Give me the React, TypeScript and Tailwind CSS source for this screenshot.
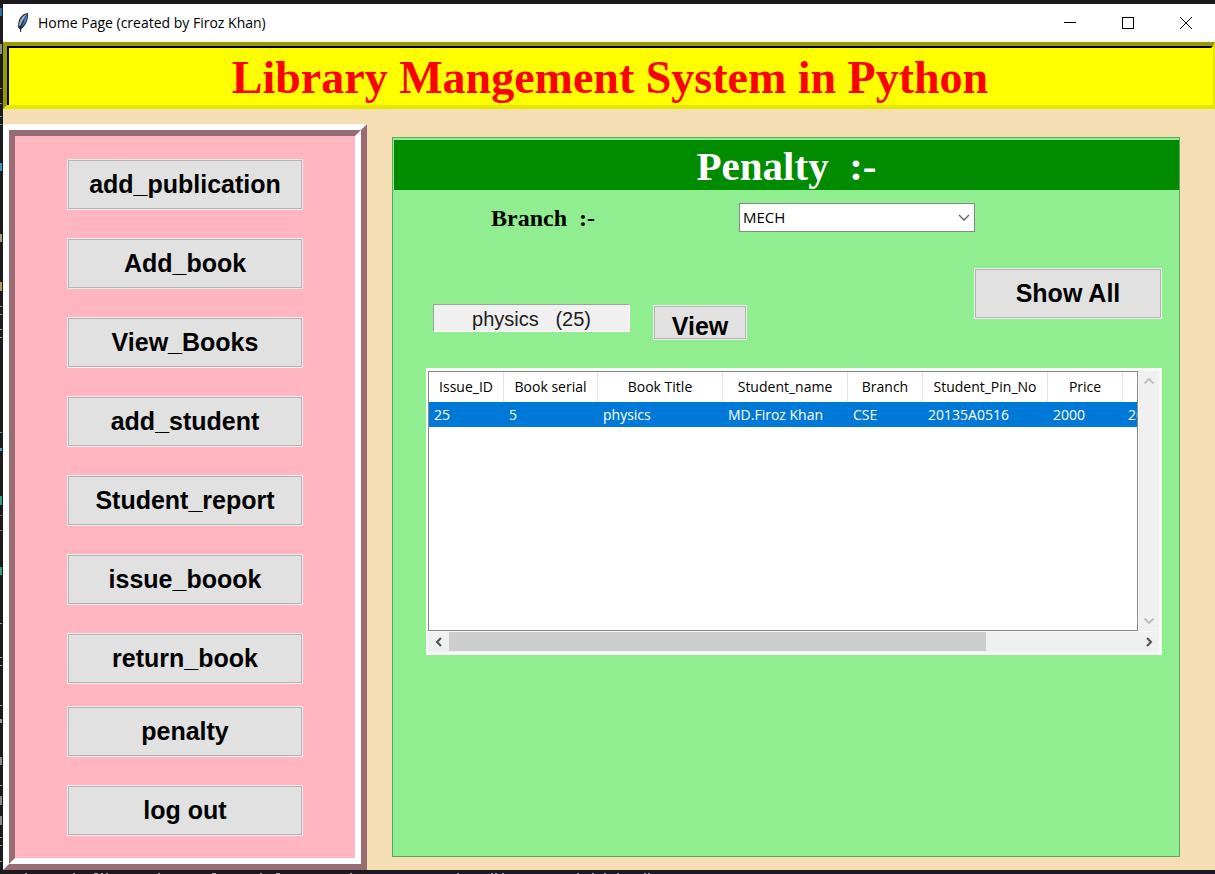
import type { ReactNode } from "react";

const menuItems = [
  "add_publication",
  "Add_book",
  "View_Books",
  "add_student",
  "Student_report",
  "issue_boook",
  "return_book",
];
const accountItems = ["penalty", "log out"];

const columns = [
  { title: "Issue_ID", value: "25", width: "w-[75px]" },
  { title: "Book serial", value: "5", width: "w-[94px]" },
  { title: "Book Title", value: "physics", width: "w-[125px]" },
  { title: "Student_name", value: "MD.Firoz Khan", width: "w-[125px]" },
  { title: "Branch", value: "CSE", width: "w-[75px]" },
  { title: "Student_Pin_No", value: "20135A0516", width: "w-[125px]" },
  { title: "Price", value: "2000", width: "w-[75px]" },
  { title: "", value: "20", width: "w-[125px]" },
];

// Marks of the editor window that lies behind this one: [y, height, colour]
const editorMarks: [number, number, string][] = [
  [8, 8, "#2f6f9f"], [44, 10, "#8a8a80"], [88, 1, "#c07040"], [103, 1, "#c07040"],
  [116, 1, "#3fb090"], [124, 1, "#3fb090"], [163, 8, "#3f8fbf"], [234, 8, "#a0a070"],
  [282, 9, "#b09a60"], [306, 1, "#6fa8c8"], [314, 1, "#6fa8c8"], [329, 1, "#6fa8c8"],
  [337, 1, "#6fa8c8"], [432, 1, "#3f9fcf"], [448, 3, "#3f9fcf"], [496, 9, "#2f9f80"],
  [515, 1, "#c05030"], [530, 1, "#c07040"], [567, 8, "#2f9f80"], [623, 1, "#999999"],
  [657, 1, "#999999"], [665, 1, "#999999"], [705, 1, "#999999"], [719, 4, "#999999"],
  [757, 8, "#888888"], [785, 1, "#999999"], [796, 9, "#888888"], [816, 9, "#888888"],
  [837, 1, "#999999"], [845, 1, "#999999"], [861, 1, "#999999"],
];

// Marks along the lower edge: [x, width]
const lowerMarks: [number, number][] = [
  [25, 2], [73, 2], [94, 4], [101, 2], [106, 2], [158, 2], [212, 4], [260, 2], [276, 4],
  [350, 2], [457, 2], [491, 2], [495, 2], [502, 2], [577, 2], [592, 2], [604, 2],
  [617, 2], [644, 2], [648, 2],
];

function PushButton({ children, className = "" }: { children: ReactNode; className?: string }) {
  return (
    <button
      type="button"
      className={`border border-[#ececec] bg-[#e1e1e1] font-['Liberation_Sans',sans-serif] text-[25px] leading-7 font-bold text-black ring-1 ring-[#b4b4b4] ring-inset ${className}`}
    >
      {children}
    </button>
  );
}

function Feather() {
  return (
    <svg width="14" height="22" viewBox="0 0 14 22" aria-hidden="true">
      <path d="M12 1 C7.500 1.200 3.500 5 2.500 10 L1.800 15 L4 17.500 L4.600 20.500 L5.300 17 C9 14.500 13 8 12 1 Z" fill="#2b3440" />
      <path d="M10.800 2 C6.500 3.500 3.800 8 3 13 L4 14.500 C5.500 10.500 8 6 10.800 2 Z" fill="#a3b2c2" />
      <path d="M11.200 2.500 C9 6 6 10 4.800 15 C8.500 12.500 11.800 8 11.200 2.500 Z" fill="#3f7fcc" />
      <path d="M8 8.500 L4.600 15 L4.600 20" fill="none" stroke="#111820" strokeWidth="0.800" />
    </svg>
  );
}

function TitleBar() {
  return (
    <div className="flex h-[38px] items-center bg-white pl-[13px] font-['Open_Sans',sans-serif] text-sm text-black">
      <Feather />
      <span className="ml-2">Home Page (created by Firoz Khan)</span>
      <div className="ml-auto flex h-full">
        <button type="button" aria-label="Minimize" className="flex w-[58px] items-center justify-center">
          <svg width="12" height="12" viewBox="0 0 12 12" stroke="#000"><path d="M0 5.500H12" /></svg>
        </button>
        <button type="button" aria-label="Maximize" className="flex w-[58px] items-center justify-center">
          <svg width="12" height="12" viewBox="0 0 12 12" fill="none" stroke="#000"><rect x=".5" y=".5" width="11" height="11" /></svg>
        </button>
        <button type="button" aria-label="Close" className="flex w-[58px] items-center justify-center">
          <svg width="12" height="12" viewBox="0 0 12 12" stroke="#000"><path d="M0 0L12 12M12 0L0 12" /></svg>
        </button>
      </div>
    </div>
  );
}

function Arrow({ d, color }: { d: string; color: string }) {
  return (
    <svg width="12" height="12" viewBox="0 0 12 12" fill="none" stroke={color} strokeWidth="2" aria-hidden="true">
      <path d={d} />
    </svg>
  );
}

function IssueTable() {
  return (
    <div className="border-2 border-b-[3px] border-[#f8fcf8] bg-[#f8f8f8] pt-px">
      <div className="flex gap-px">
        <div className="h-[260px] min-w-0 flex-1 overflow-hidden border border-[#828790] bg-white">
          <table className="w-[819px] table-fixed border-separate border-spacing-0 font-['Open_Sans',sans-serif] text-sm text-black">
            <thead>
              <tr className="h-[30px]">
                {columns.map((c, i) => (
                  <th key={i} scope="col" className={`${c.width} border-r border-[#e5e5e5] p-0 font-normal whitespace-nowrap`}>
                    {c.title}
                  </th>
                ))}
              </tr>
            </thead>
            <tbody>
              <tr className="h-[25px] bg-[#0078d7] text-white">
                {columns.map((c, i) => (
                  <td key={i} className="py-0 pr-0 pl-[5px] whitespace-nowrap">{c.value}</td>
                ))}
              </tr>
            </tbody>
          </table>
        </div>
        <div className="mr-px flex w-5 flex-col items-center justify-between bg-[#f0f0f0] py-1">
          <Arrow d="M1.500 8.500L6 4L10.500 8.500" color="#bfbfbf" />
          <Arrow d="M1.500 3.500L6 8L10.500 3.500" color="#bfbfbf" />
        </div>
      </div>
      <div className="mt-px mr-px flex h-5 items-center bg-[#f0f0f0]">
        <div className="flex w-[21px] justify-center"><Arrow d="M8 2L4 6L8 10" color="#505050" /></div>
        <div className="flex h-full flex-1">
          <div className="h-[19px] w-[78%] bg-[#cdcdcd]" />
        </div>
        <div className="flex w-[21px] justify-center"><Arrow d="M4 2L8 6L4 10" color="#505050" /></div>
      </div>
    </div>
  );
}

function PenaltyPanel() {
  return (
    <section className="mt-[28px] mr-[35px] mb-[13px] ml-[25px] min-w-0 flex-1 border border-[#5ba466] bg-[#90ee90] pt-0.5 pl-px">
      <h2 className="h-[50px] bg-[#008b00] pt-[3px] text-center font-['Liberation_Serif',serif] text-[41px] leading-[46px] font-bold whitespace-pre text-white">
        {"Penalty  :-"}
      </h2>
      <div className="pr-[17px] pl-8">
        <div className="mt-[13px] flex items-center pl-[65px]">
          <label htmlFor="branch" className="w-[248px] font-['Liberation_Serif',serif] text-2xl leading-7 font-bold whitespace-pre text-black">
            {"Branch  :-"}
          </label>
          <div className="relative w-[236px]">
            <select
              id="branch"
              defaultValue="MECH"
              className="block h-[29px] w-full appearance-none border border-[#7f8f7f] bg-white pl-[3px] font-['Open_Sans',sans-serif] text-[15px] text-black"
            >
              <option>MECH</option>
              <option>CSE</option>
            </select>
            <svg className="pointer-events-none absolute top-[11px] right-[5px]" width="12" height="8" viewBox="0 0 12 8" fill="none" stroke="#606060" strokeWidth="1.300">
              <path d="M1 1L6 6L11 1" />
            </svg>
          </div>
        </div>
        <div className="mt-9 flex items-start pl-[7px]">
          <div className="mt-9 h-[28px] w-[197px] border border-t-[#a0a0a0] border-r-white border-b-white border-l-[#a0a0a0] bg-[#f0f0f0] text-center font-['Liberation_Sans',sans-serif] text-xl leading-7 whitespace-pre text-[#202020]">
            {"physics   (25)"}
          </div>
          <PushButton className="mt-[37px] ml-[23px] h-[35px] w-[94px] pt-1.5">View</PushButton>
          <PushButton className="ml-auto h-[51px] w-[188px] pb-0.5">Show All</PushButton>
        </div>
        <div className="mt-[28px]">
          <IssueTable />
        </div>
      </div>
    </section>
  );
}

export default function App() {
  return (
    <div className="relative flex min-h-screen flex-col overflow-hidden bg-[#1b1a1c] pt-1 pb-1 pl-[3px]">
      <svg className="absolute top-0 left-0" width="2" height="874" aria-hidden="true">
        {editorMarks.map(([y, h, color]) => (
          <rect key={y} x="0" y={y} width="2" height={h} fill={color} />
        ))}
      </svg>
      <svg className="absolute bottom-0 left-0" width="700" height="1" aria-hidden="true">
        {lowerMarks.map(([x, w]) => (
          <rect key={x} x={x} y="0" width={w} height="1" fill="#a8a8a8" />
        ))}
      </svg>
      <TitleBar />
      <header className="border-4 border-r-2 border-t-[#999900] border-r-[#e6e600] border-b-[#e6e600] border-l-[#999900]">
        <h1 className="border-2 border-t-black border-r-[#ffff00] border-b-0 border-l-black bg-[#ffff00] pt-[3px] pb-px text-center font-['Liberation_Serif',serif] text-[46px] leading-[53px] font-bold text-[#ff0000]">
          Library Mangement System in Python
        </h1>
      </header>
      <main className="flex flex-1 bg-[#f5deb3]">
        <nav className="mt-[15px] w-[364px] shrink-0 border-6 border-t-white border-r-[#996c73] border-b-[#996c73] border-l-white">
          <div className="flex h-full flex-col border-6 border-t-[#996c73] border-r-white border-b-white border-l-[#996c73] bg-[#ffb6c1] px-[52px] pt-[23px] pb-[21px]">
            <div className="flex flex-col gap-7">
              {menuItems.map((item) => (
                <PushButton key={item} className="h-[51px] pb-0.5">{item}</PushButton>
              ))}
            </div>
            <div className="mt-[22px] flex flex-col gap-7">
              {accountItems.map((item) => (
                <PushButton key={item} className="h-[51px] pb-0.5">{item}</PushButton>
              ))}
            </div>
          </div>
        </nav>
        <PenaltyPanel />
      </main>
    </div>
  );
}
